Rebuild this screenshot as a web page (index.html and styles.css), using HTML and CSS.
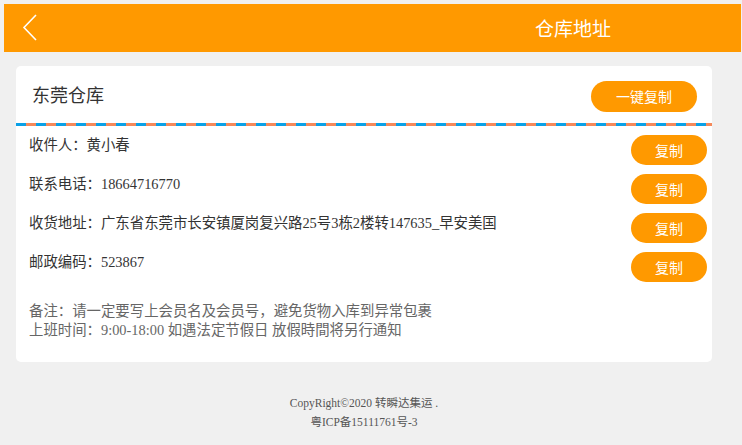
FILE: index.html
```html
<!DOCTYPE html>
<html lang="zh-CN">
<head>
<meta charset="utf-8">
<title>仓库地址</title>
<link rel="stylesheet" href="styles.css">
</head>
<body>
<header class="topbar">
  <a class="back" href="#" aria-label="返回">
    <svg width="16" height="28" viewBox="0 0 16 28"><path d="M14 1 L2 13.5 L14 26" fill="none" stroke="#fff" stroke-width="1.6"/></svg>
  </a>
  <h1 class="title">仓库地址</h1>
</header>
<main class="page">
  <section class="card">
    <div class="card-head">
      <h2 class="wh-name">东莞仓库</h2>
      <button class="btn btn-all">一键复制</button>
    </div>
    <div class="stripe"></div>
    <ul class="rows">
      <li class="row"><span class="txt">收件人：黄小春</span><button class="btn btn-copy">复制</button></li>
      <li class="row"><span class="txt">联系电话：18664716770</span><button class="btn btn-copy">复制</button></li>
      <li class="row"><span class="txt">收货地址：广东省东莞市长安镇厦岗复兴路25号3栋2楼转147635_早安美国</span><button class="btn btn-copy">复制</button></li>
      <li class="row"><span class="txt">邮政编码：523867</span><button class="btn btn-copy">复制</button></li>
    </ul>
    <div class="note">
      <p>备注：请一定要写上会员名及会员号，避免货物入库到异常包裹</p>
      <p>上班时间：9:00-18:00 如遇法定节假日 放假時間将另行通知</p>
    </div>
  </section>
  <footer class="foot">
    <p>CopyRight©2020 转瞬达集运 .</p>
    <p>粤ICP备15111761号-3</p>
  </footer>
</main>
</body>
</html>
```
FILE: styles.css
```css
html, body {
  margin: 0;
  padding: 0;
  background: #f0f0f0;
  font-family: "Liberation Serif", "Noto Sans CJK SC", serif;
  color: #333;
}
.topbar {
  margin: 4px 1px 0 4px;
  height: 48px;
  background: #ff9900;
  display: flex;
  align-items: center;
}
.back {
  display: flex;
  margin-left: 18px;
}
.title {
  margin: 0 130px 0 auto;
  font-family: "Noto Sans CJK SC", sans-serif;
  font-weight: normal;
  font-size: 19px;
  color: #fff;
  line-height: 24px;
}
.page {
  width: 720px;
  margin-left: 4px;
  padding-top: 14px;
}
.card {
  margin: 0 12px;
  background: #fff;
  border-radius: 5px;
}
.card-head {
  height: 57px;
  display: flex;
  align-items: center;
  justify-content: space-between;
  padding: 0 15px 0 16px;
}
.wh-name {
  margin: 0;
  font-family: "Noto Sans CJK SC", sans-serif;
  font-weight: normal;
  font-size: 18px;
  color: #333;
  margin-top: -2px;
}
.btn {
  border: 0;
  background: #ff9900;
  color: #fff;
  font-family: "Noto Sans CJK SC", sans-serif;
  font-size: 14px;
  border-radius: 16px;
  padding: 0;
  cursor: pointer;
}
.btn-all {
  width: 106px;
  height: 31px;
  margin-top: 3px;
}
.stripe {
  height: 3px;
  background: repeating-linear-gradient(90deg, #0aa0e6 0 10px, #f5895a 10px 20px);
}
.rows {
  list-style: none;
  margin: 0;
  padding: 0 5px 0 13px;
}
.row {
  display: flex;
  justify-content: space-between;
  align-items: flex-start;
  padding-top: 9px;
}
.txt {
  font-size: 14.4px;
  line-height: 20px;
  color: #333;
}
.btn-copy {
  width: 76px;
  height: 30px;
  border-radius: 15px;
  flex: none;
}
.note {
  padding: 20px 13px 22px;
  font-size: 14.4px;
  line-height: 19px;
  color: #666;
}
.note p { margin: 0; }
.foot {
  padding-top: 32px;
  text-align: center;
  font-size: 11.5px;
  line-height: 19px;
  color: #555;
}
.foot p { margin: 0; }
```
